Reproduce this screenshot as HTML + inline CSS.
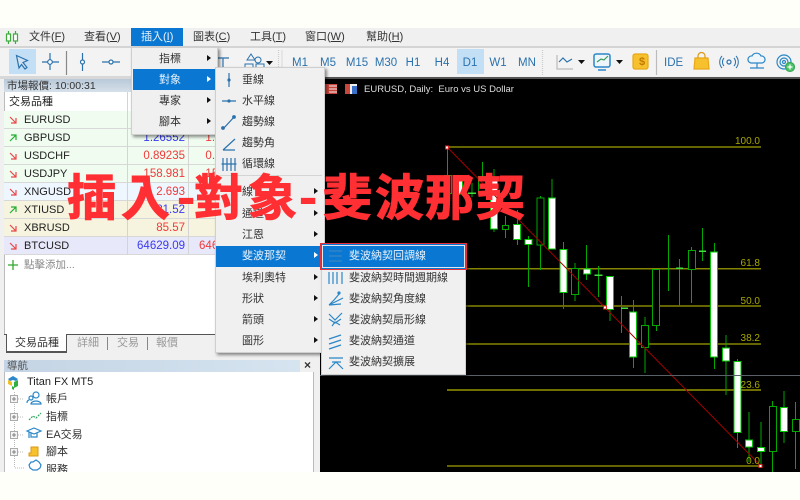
<!DOCTYPE html>
<html><head><meta charset="utf-8"><style>
html,body{margin:0;padding:0;width:800px;height:500px;overflow:hidden;background:#f0f0f0}
body{position:relative;font-family:"Liberation Sans","Noto Sans CJK TC",sans-serif;font-size:11px;color:#222}
.a{position:absolute;white-space:nowrap}
.mi{position:absolute;top:28px;height:18px;line-height:19px;font-size:11px;color:#333}
.tf{position:absolute;top:56px;font-size:11.5px;color:#2b72ad;width:26px;text-align:center;line-height:14px}
.row{position:absolute;left:4px;width:316px;height:17px;border-bottom:1px solid #d8d8d8}
.sym{position:absolute;left:20px;top:2px;font-size:11px;color:#222;line-height:14px}
.v1,.v2{position:absolute;top:2px;font-size:11.5px;line-height:14px;text-align:right}
.v1{right:135px}.v2{right:73px}
.r{color:#f03a3a}.b{color:#3a3af0}
.arr{position:absolute;left:5px;top:5px}
.menu{position:absolute;background:#f0f0f0;box-shadow:2px 2px 3px rgba(0,0,0,.45);border:1px solid #cfcfcf;box-sizing:border-box}
.it{position:absolute;font-size:11px;line-height:14px;color:#333}
.tri{position:absolute;width:0;height:0;border-left:4px solid #111;border-top:3.5px solid transparent;border-bottom:3.5px solid transparent}
.tab{position:absolute;top:336px;font-size:11px;color:#999;line-height:14px}
.nav{position:absolute;font-size:11px;line-height:14px;color:#333}
.fl{position:absolute;font-size:10px;color:#a8a800;line-height:11px;text-align:right;width:40px;left:720px}
.tt{position:absolute;top:161px;font-family:"Noto Sans CJK TC","Noto Sans CJK SC",sans-serif;font-weight:700;font-size:49px;line-height:68px;color:#ff2f33;-webkit-text-stroke:1px #ff2f33;white-space:nowrap}
</style></head><body>
<div class="a" style="left:0;top:0;width:800px;height:28px;background:#fffffa"></div>
<div class="a" style="left:0;top:46px;width:800px;height:2px;background:#d4d4d4"></div>
<div class="a" style="left:0;top:48px;width:800px;height:28px;background:#f3f3f3"></div>
<div class="a" style="left:0;top:76px;width:320px;height:3px;background:#d8d8d8"></div>

<!-- logo -->
<svg class="a" style="left:5px;top:30px" width="14" height="15" viewBox="0 0 14 15"><path d="M3.5 1v13M10.5 1v13" stroke="#3cab3c" stroke-width="1.2"/><rect x="1.5" y="4" width="4" height="7" fill="#fff" stroke="#3cab3c" stroke-width="1.2"/><rect x="8.5" y="4" width="4" height="7" fill="#fff" stroke="#3cab3c" stroke-width="1.2"/></svg>
<div class="mi" style="left:29px">文件(<u>F</u>)</div>
<div class="mi" style="left:84px">查看(<u>V</u>)</div>
<div class="a" style="left:131px;top:28px;width:52px;height:18px;background:#0a78d2"></div>
<div class="mi" style="left:141px;color:#e8f2fb">插入(<u>I</u>)</div>
<div class="mi" style="left:193px">圖表(<u>C</u>)</div>
<div class="mi" style="left:250px">工具(<u>T</u>)</div>
<div class="mi" style="left:305px">窗口(<u>W</u>)</div>
<div class="mi" style="left:366px">幫助(<u>H</u>)</div>

<!-- toolbar -->
<div class="a" style="left:9px;top:49px;width:27px;height:25px;background:#c3dff5"></div>
<svg class="a" style="left:0;top:48px" width="300" height="28" viewBox="0 0 300 28" fill="none" stroke="#2b72ad" stroke-width="1.2">
<path d="M16.5 7.5l11 5-4.5 2 4 5-2 1.500-3.500-4.500-2.500 3.500z" fill="#cfe3f3"/>
<path d="M50 5v17M42 14h17"/><circle cx="50" cy="14" r="2.300" fill="#fff"/>
<path d="M66.500 3v24" stroke="#888"/>
<path d="M82.500 5v18"/><circle cx="82.500" cy="14" r="2" fill="#fff"/>
<path d="M102 14h18"/><circle cx="111" cy="14" r="2" fill="#fff"/>
<path d="M217 10h12M223 10v14"/>
<path d="M247 12l4-6 4 6zM258 9a3 3 0 1 0 .01 0M245 16h8v6h-8zM256 16h8v6h-8z" stroke-width="1"/>
<path d="M266 13h7l-3.500 4z" fill="#111" stroke="none"/>
<path d="M278.500 2v26" stroke="#ccc" stroke-dasharray="1 1"/>
<path d="M282 2v26" stroke="#ddd"/>
</svg>
<div class="tf" style="left:287px">M1</div><div class="tf" style="left:315px">M5</div><div class="tf" style="left:344px">M15</div><div class="tf" style="left:373px">M30</div><div class="tf" style="left:400px">H1</div><div class="tf" style="left:429px">H4</div>
<div class="a" style="left:457px;top:49px;width:27px;height:25px;background:#c3dff5"></div>
<div class="tf" style="left:457px">D1</div><div class="tf" style="left:485px">W1</div><div class="tf" style="left:514px">MN</div>
<svg class="a" style="left:540px;top:48px" width="260" height="28" viewBox="540 48 260 28" fill="none" stroke-width="1.200">
<path d="M542.500 50v25" stroke="#ccc" stroke-dasharray="1 1"/>
<path d="M557 55v14h16" stroke="#bbb"/><path d="M559 62l4-4 4 4 5-3" stroke="#2b72ad"/>
<path d="M578 60h7l-3.500 4z" fill="#111"/>
<rect x="594" y="54" width="16" height="13" rx="2" stroke="#2b87c8" stroke-width="1.500" fill="#eef6fb"/><path d="M597 62l4-3 3 1 4-4" stroke="#3a9a5a"/><path d="M598 70h8" stroke="#2b87c8" stroke-width="1.500"/>
<path d="M616 60h7l-3.500 4z" fill="#111" stroke="none"/>
<rect x="633" y="54" width="15" height="15" rx="2" fill="#f7c12e" stroke="#e8a818"/>
<path d="M656.500 50v25" stroke="#bbb"/>
<path d="M695 58h13l1 11h-15z" fill="#f7c12e" stroke="#e8a818"/><path d="M698 58v-2a3 3 0 0 1 7 0v2" stroke="#d99a18"/>
<circle cx="729" cy="62" r="2" stroke="#2b72ad"/><path d="M724 58a6 6 0 0 0 0 8M734 58a6 6 0 0 1 0 8M722 56a9 9 0 0 0 0 12M736 56a9 9 0 0 1 0 12" stroke="#2b72ad" stroke-width="1"/>
<path d="M751 63a3.500 3.500 0 0 1 1-7 5 5 0 0 1 9 0 3.500 3.500 0 0 1 1 7z" stroke="#2b87c8" fill="#eef6fb"/><path d="M757 63v5M750 68h14" stroke="#2b87c8"/>
<circle cx="784" cy="62" r="7" stroke="#2b87c8"/><circle cx="784" cy="62" r="4" stroke="#2b87c8"/><circle cx="784" cy="62" r="1.500" stroke="#2b87c8"/>
<circle cx="790" cy="67" r="4.500" fill="#4fc46a" stroke="#3aa855"/><path d="M790 64.500v5M787.500 67h5" stroke="#fff"/>
</svg>
<div class="a" style="left:639px;top:55px;font-size:11px;color:#c07a00;font-weight:bold;line-height:14px">$</div>
<div class="a" style="left:664px;top:56px;font-size:11.500px;color:#2b72ad;line-height:14px">IDE</div>

<!-- chart -->
<div class="a" style="left:320px;top:77px;width:480px;height:2px;background:#555"></div>
<div class="a" style="left:320px;top:79px;width:480px;height:393px;background:#000"></div>
<svg class="a" style="left:325px;top:84px" width="34" height="11" viewBox="0 0 34 11"><rect x="0" y="0" width="12" height="10" fill="#c8463c"/><path d="M4 2h8M4 5h8M4 8h8" stroke="#eee"/><rect x="20" y="0" width="12" height="10" fill="#eee"/><rect x="20" y="0" width="5" height="10" fill="#c8463c"/><rect x="27" y="2" width="5" height="8" fill="#3a6fc8"/></svg>
<div class="a" style="left:364px;top:84px;font-size:9.500px;color:#ddd;line-height:11px">EURUSD, Daily:&nbsp; Euro vs US Dollar</div>
<svg class="a" style="left:320px;top:79px" width="480" height="393" viewBox="320 79 480 393">
<g stroke="#858500" stroke-width="1.500"><path d="M447 147h314M447 268.700h314M447 306h314M447 344h314M447 466h314"/></g>
<path d="M447 390h314" stroke="#b4b400" stroke-width="1.300"/>
<g shape-rendering="crispEdges">
<g stroke="#00a800" stroke-width="1" fill="none">
<path d="M447.500 148v45M459.500 180v15M472 183v14M482.500 162v30M494 169v63M505.500 216v22M517.500 210v35M528.500 236v51M540.500 196v74M552 179v45M563.500 242v67M575 263v38M586.500 245v35M598.500 266v31M610 276v45M621.500 296v37M633.500 300v68M645 317v56M656.500 290v41M668.500 235v56M679.500 259v47M691.500 247v56M702.500 228v33M714.500 243v126M726 335v60M737.500 359v89M749 412v50M761 422v44M772.500 401v71M784 391v52M795.500 402v67"/>
</g>
<g stroke="#00a800" stroke-width="1.200" fill="#000">
<rect x="444.500" y="175.500" width="7" height="18"/><rect x="478.500" y="176.500" width="7" height="17"/><rect x="502.500" y="225.500" width="6" height="4"/><rect x="537" y="198" width="7" height="47"/><rect x="571.500" y="268.500" width="7" height="26"/><rect x="641.500" y="325.500" width="7" height="22"/><rect x="652.500" y="269.500" width="7" height="56"/><rect x="688.500" y="250.500" width="7" height="19"/><rect x="769.500" y="406.500" width="7" height="45"/><rect x="792.500" y="419.500" width="7" height="12"/>
</g>
<g stroke="#00c800" stroke-width="1.200" fill="#fff">
<rect x="456.500" y="179" width="6" height="15"/><rect x="490.500" y="177" width="7" height="52"/><rect x="513.500" y="224.500" width="7" height="15"/><rect x="525" y="239.500" width="7" height="5"/><rect x="548.500" y="198" width="7" height="51"/><rect x="560" y="249.500" width="7" height="43"/><rect x="583.500" y="269" width="7" height="5"/><rect x="606.500" y="276.500" width="7" height="33"/><rect x="629.500" y="312" width="7" height="45"/><rect x="710.500" y="252" width="7" height="105"/><rect x="722.500" y="348" width="7" height="13"/><rect x="734" y="361.500" width="7" height="71"/><rect x="745.500" y="440" width="7" height="7"/><rect x="757.500" y="447.500" width="7" height="4"/><rect x="780.500" y="407.500" width="7" height="24"/>
</g>
<g stroke="#40e040" stroke-width="1.500"><path d="M468 193h8M594.500 275h8M621 308h7M676 268h7M699 251h7"/></g>
</g>
<path d="M447.500 147.500L761 466" stroke="#a00000" stroke-width="1"/>
<rect x="445.500" y="146" width="3" height="3" fill="#fff" stroke="#e02020"/><rect x="603.500" y="306" width="3" height="3" fill="#fff" stroke="#e02020"/><rect x="759" y="464.500" width="3" height="3" fill="#fff" stroke="#e02020"/>
<path d="M320 375.500h480" stroke="#5a6068" stroke-width="1"/>
</svg>
<div class="fl" style="top:136px">100.0</div><div class="fl" style="top:258px">61.8</div><div class="fl" style="top:296px">50.0</div><div class="fl" style="top:333px">38.2</div><div class="fl" style="top:380px">23.6</div><div class="fl" style="top:456px">0.0</div>

<!-- market watch -->
<div class="a" style="left:4px;top:79px;width:316px;height:13px;background:linear-gradient(#b9c9d8,#d5e0ea)"></div>
<div class="a" style="left:7px;top:79px;font-size:10.500px;color:#333;line-height:14px">市場報價: 10:00:31</div>
<div class="a" style="left:4px;top:92px;width:316px;height:243px;background:#fff;border-left:1px solid #bbb;box-sizing:border-box"></div>
<div class="a" style="left:9px;top:95px;font-size:11px;color:#222;line-height:14px">交易品種</div>

<div class="row" style="top:111px;background:#f0fcf0"><svg class="arr" width="8" height="8"><path d="M1 1l6 6M2 7h5V2" stroke="#e84848" fill="none" stroke-width="1.200"/></svg><span class="sym">EURUSD</span></div>
<div class="row" style="top:129px;background:#f0fcf0"><svg class="arr" width="8" height="8"><path d="M1 7l6-6M2 1h5v5" stroke="#20b030" fill="none" stroke-width="1.200"/></svg><span class="sym">GBPUSD</span><span class="v1 b">1.26552</span><span class="v2 r">1.26562</span></div>
<div class="row" style="top:147px;background:#f0fcf0"><svg class="arr" width="8" height="8"><path d="M1 1l6 6M2 7h5V2" stroke="#e84848" fill="none" stroke-width="1.200"/></svg><span class="sym">USDCHF</span><span class="v1 r">0.89235</span><span class="v2 r">0.89245</span></div>
<div class="row" style="top:165px;background:#f0fcf0"><svg class="arr" width="8" height="8"><path d="M1 1l6 6M2 7h5V2" stroke="#e84848" fill="none" stroke-width="1.200"/></svg><span class="sym">USDJPY</span><span class="v1 r">158.981</span><span class="v2 r">158.991</span></div>
<div class="row" style="top:183px;background:#eef6ff"><svg class="arr" width="8" height="8"><path d="M1 1l6 6M2 7h5V2" stroke="#e84848" fill="none" stroke-width="1.200"/></svg><span class="sym">XNGUSD</span><span class="v1 r">2.693</span><span class="v2 r">2.698</span></div>
<div class="row" style="top:201px;background:#f6f3de"><svg class="arr" width="8" height="8"><path d="M1 7l6-6M2 1h5v5" stroke="#20b030" fill="none" stroke-width="1.200"/></svg><span class="sym">XTIUSD</span><span class="v1 b">81.52</span><span class="v2 r">81.56</span></div>
<div class="row" style="top:219px;background:#f6f3de"><svg class="arr" width="8" height="8"><path d="M1 1l6 6M2 7h5V2" stroke="#e84848" fill="none" stroke-width="1.200"/></svg><span class="sym">XBRUSD</span><span class="v1 r">85.57</span><span class="v2 r">85.61</span></div>
<div class="row" style="top:237px;background:#e8e8fb"><svg class="arr" width="8" height="8"><path d="M1 1l6 6M2 7h5V2" stroke="#e84848" fill="none" stroke-width="1.200"/></svg><span class="sym">BTCUSD</span><span class="v1 b">64629.09</span><span class="v2 r">64661.09</span></div>
<div class="a" style="left:127px;top:92px;width:1px;height:163px;background:#d4d4d4"></div>
<div class="a" style="left:188px;top:92px;width:1px;height:163px;background:#d4d4d4"></div>
<svg class="a" style="left:7px;top:259px" width="12" height="12"><path d="M6 1v10M1 6h10" stroke="#30a830" stroke-width="1.300"/></svg>
<div class="a" style="left:24px;top:258px;font-size:10.500px;color:#888;line-height:14px">點擊添加...</div>

<!-- tabs -->
<div class="a" style="left:4px;top:334px;width:316px;height:19px;background:#f0f0f0;border-top:1px solid #555;box-sizing:border-box"></div>
<div class="a" style="left:6px;top:334px;width:61px;height:19px;background:#fff;border:1px solid #555;border-top:0;border-bottom:2px solid #555;box-sizing:border-box"></div>
<div class="tab" style="left:15px;color:#333">交易品種</div><div class="tab" style="left:77px">詳細</div><div class="tab" style="left:117px">交易</div><div class="tab" style="left:156px">報價</div>
<div class="a" style="left:107px;top:337px;width:1px;height:13px;background:#888"></div>
<div class="a" style="left:147px;top:337px;width:1px;height:13px;background:#888"></div>

<!-- navigator -->
<div class="a" style="left:4px;top:360px;width:296px;height:12px;background:linear-gradient(90deg,#c4d4e4,#d6e4f0)"></div>
<div class="a" style="left:7px;top:359px;font-size:10.500px;color:#555;line-height:14px">導航</div>
<div class="a" style="left:304px;top:358px;font-size:12px;color:#333;line-height:15px;font-weight:bold">×</div>
<div class="a" style="left:4px;top:372px;width:310px;height:100px;background:#fff;border-left:1px solid #bbb;box-sizing:border-box"></div>
<div class="a" style="left:313px;top:372px;width:1px;height:100px;background:#bbb"></div>
<svg class="a" style="left:5px;top:373px" width="40" height="99" viewBox="5 373 40 99" fill="none">
<path d="M8 379l5-3 5 3-2 2-3-1-3 1z" fill="#2b87c8"/><path d="M8 380l4 2v4l-4-2z" fill="#f0c020"/><path d="M18 380l-4 2v6l4-2z" fill="#30b040"/><path d="M12 386l2 1v3l-2-1z" fill="#30b040"/>
<path d="M14.500 392v76M18 399h6M18 417h6M18 435h6M18 452h6M15 468h10" stroke="#bbb" stroke-dasharray="1 1"/>
<g stroke="#aaa" fill="#f4f4f4"><rect x="10.500" y="395.500" width="7" height="7"/><rect x="10.500" y="413.500" width="7" height="7"/><rect x="10.500" y="431.500" width="7" height="7"/><rect x="10.500" y="448.500" width="7" height="7"/></g>
<path d="M12 399h4M14 397v4M12 417h4M14 415v4M12 435h4M14 433v4M12 452h4M14 450v4" stroke="#666" stroke-width=".8"/>
<g stroke="#2b87c8" stroke-width="1.200"><circle cx="36" cy="395" r="3"/><circle cx="31" cy="398" r="2"/><path d="M31 404a5 3 0 0 1 10 0zM27 403a3 3 0 0 1 2-3"/></g>
<path d="M29 420l4-4 3 2 5-5" stroke="#30a860" stroke-dasharray="2 1" stroke-width="1.200"/>
<path d="M27 431l7-3 7 3-7 3zM31 433v4h6v-4M29 432v6" stroke="#2b87c8" stroke-width="1.200"/>
<path d="M31 447h7v9h-9v-3h2z" fill="#f7c12e" stroke="#d99a18"/>
<path d="M33 462l3-2 3 2 2 3-1 3-3 2h-4l-3-2-1-3 2-3z" stroke="#2b87c8" stroke-width="1.200"/>
</svg>
<div class="nav" style="left:27px;top:375px;color:#222">Titan FX MT5</div>
<div class="nav" style="left:46px;top:392px">帳戶</div>
<div class="nav" style="left:46px;top:410px">指標</div>
<div class="nav" style="left:46px;top:428px">EA交易</div>
<div class="nav" style="left:46px;top:445px">腳本</div>
<div class="nav" style="left:46px;top:463px">服務</div>

<!-- menu 1 -->
<div class="menu" style="left:131px;top:47px;width:87px;height:88px"></div>
<div class="a" style="left:133px;top:69px;width:82px;height:21px;background:#0a78d2"></div>
<div class="it" style="left:159px;top:52px">指標</div><div class="tri" style="left:207px;top:55px"></div>
<div class="it" style="left:159px;top:73px;color:#e8f2fb">對象</div><div class="tri" style="left:207px;top:76px;border-left-color:#fff"></div>
<div class="it" style="left:159px;top:94px">專家</div><div class="tri" style="left:207px;top:97px"></div>
<div class="it" style="left:159px;top:115px">腳本</div><div class="tri" style="left:207px;top:118px"></div>

<!-- menu 2 -->
<div class="menu" style="left:215px;top:67px;width:110px;height:286px"></div>
<svg class="a" style="left:218px;top:70px" width="26" height="105" viewBox="218 70 26 105" fill="none" stroke="#2b72ad" stroke-width="1.200">
<path d="M229 73v14M222 101h14M223 129l12-13M223 150l12-11M223 150h12"/>
<circle cx="229" cy="80" r="1" fill="#2b72ad"/><circle cx="229" cy="101" r="1" fill="#2b72ad"/>
<circle cx="223" cy="128" r="1.300" fill="#2b72ad"/><circle cx="234" cy="117" r="1.300" fill="#2b72ad"/>
<path d="M223 158v13M227 158v13M231 158v13M235 158v13M221.500 164h15"/>
</svg>
<div class="it" style="left:242px;top:73px">垂線</div>
<div class="it" style="left:242px;top:94px">水平線</div>
<div class="it" style="left:242px;top:115px">趨勢線</div>
<div class="it" style="left:242px;top:136px">趨勢角</div>
<div class="it" style="left:242px;top:157px">循環線</div>
<div class="a" style="left:217px;top:175px;width:105px;height:1px;background:#d4d4d4"></div>
<div class="it" style="left:242px;top:185px">線</div><div class="tri" style="left:314px;top:188px"></div>
<div class="it" style="left:242px;top:207px">通道</div><div class="tri" style="left:314px;top:210px"></div>
<div class="it" style="left:242px;top:228px">江恩</div><div class="tri" style="left:314px;top:231px"></div>
<div class="a" style="left:216px;top:246px;width:106px;height:21px;background:#0a78d2"></div>
<div class="it" style="left:242px;top:249px;color:#e8f2fb">斐波那契</div><div class="tri" style="left:314px;top:252px;border-left-color:#fff"></div>
<div class="it" style="left:242px;top:271px">埃利奧特</div><div class="tri" style="left:314px;top:274px"></div>
<div class="it" style="left:242px;top:292px">形狀</div><div class="tri" style="left:314px;top:295px"></div>
<div class="it" style="left:242px;top:313px">箭頭</div><div class="tri" style="left:314px;top:316px"></div>
<div class="it" style="left:242px;top:334px">圖形</div><div class="tri" style="left:314px;top:337px"></div>

<!-- menu 3 -->
<div class="menu" style="left:321px;top:244px;width:145px;height:131px"></div>
<div class="a" style="left:320px;top:243px;width:147px;height:27px;border:1.500px solid #e8303a;box-sizing:border-box;background:#0a78d2;outline:1px solid #dfe8f0;outline-offset:-3px"></div>
<svg class="a" style="left:325px;top:248px" width="24" height="122" viewBox="325 248 24 122" fill="none" stroke="#2b87c8" stroke-width="1.200">
<path d="M329 251h13M329 256h13M329 261h13" stroke="#3a86c0"/>
<path d="M329 272v12M333 272v12M337 272v12M342 272v12"/>
<path d="M329 305l5-5 6-7M329 305l8-4 6-3M329 305l12-1"/><circle cx="339" cy="293" r="1" fill="#2b87c8"/>
<path d="M329 314l6 6 7-7M329 319l6 4 6-4M332 326l3-4 5 3"/>
<path d="M329 339l12-4M329 344l12-4M329 349l12-4" stroke-width="1.300"/>
<path d="M329 358h14M332 362h9M329 369l7-7 7 7"/>
</svg>
<div class="it" style="left:349px;top:249px;color:#e8f2fb">斐波納契回調線</div>
<div class="it" style="left:349px;top:271px">斐波納契時間週期線</div>
<div class="it" style="left:349px;top:292px">斐波納契角度線</div>
<div class="it" style="left:349px;top:313px">斐波納契扇形線</div>
<div class="it" style="left:349px;top:334px">斐波納契通道</div>
<div class="it" style="left:349px;top:355px">斐波納契擴展</div>

<!-- overlay title -->
<div class="tt" style="left:67px">插</div>
<div class="tt" style="left:121px">入</div>
<div class="tt" style="left:177px">-</div>
<div class="tt" style="left:194px">對</div>
<div class="tt" style="left:248px">象</div>
<div class="tt" style="left:299px">-</div>
<div class="tt" style="left:323px">斐</div>
<div class="tt" style="left:375px">波</div>
<div class="tt" style="left:425px">那</div>
<div class="tt" style="left:476px">契</div>

<div class="a" style="left:0;top:472px;width:800px;height:28px;background:#fffffa"></div>
</body></html>
